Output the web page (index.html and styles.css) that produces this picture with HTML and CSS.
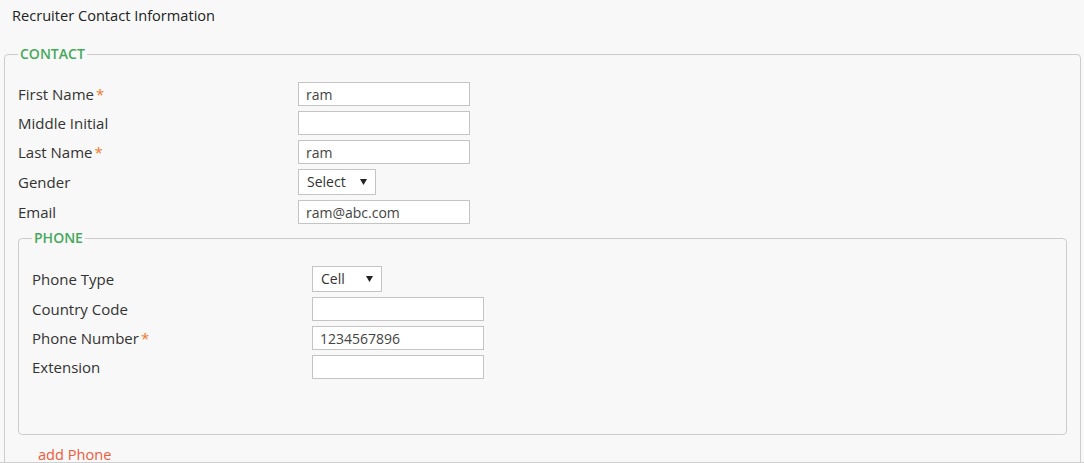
FILE: index.html
```html
<!DOCTYPE html>
<html lang="en">
<head>
<meta charset="utf-8">
<title>Recruiter Contact Information</title>
<link rel="stylesheet" href="styles.css">
</head>
<body>
<div class="page">
  <h1 class="title">Recruiter Contact Information</h1>
  <fieldset class="group">
    <legend class="legend">CONTACT</legend>
    <div class="rows">
      <div class="row">
        <label class="label">First Name<span class="req">*</span></label>
        <input class="input" type="text" value="ram">
      </div>
      <div class="row">
        <label class="label">Middle Initial</label>
        <input class="input" type="text" value="">
      </div>
      <div class="row">
        <label class="label">Last Name<span class="req">*</span></label>
        <input class="input" type="text" value="ram">
      </div>
      <div class="row">
        <label class="label">Gender</label>
        <div class="select select-gender">
          <span class="select-text">Select</span>
          <svg class="caret" width="7" height="6" viewBox="0 0 7 6"><path d="M0 0H7L3.5 6Z" fill="#222"/></svg>
        </div>
      </div>
      <div class="row">
        <label class="label">Email</label>
        <input class="input" type="text" value="ram@abc.com">
      </div>
      <fieldset class="group inner">
        <legend class="legend">PHONE</legend>
        <div class="rows">
          <div class="row">
            <label class="label">Phone Type</label>
            <div class="select select-phone">
              <span class="select-text">Cell</span>
              <svg class="caret" width="7" height="6" viewBox="0 0 7 6"><path d="M0 0H7L3.5 6Z" fill="#222"/></svg>
            </div>
          </div>
          <div class="row">
            <label class="label">Country Code</label>
            <input class="input" type="text" value="">
          </div>
          <div class="row">
            <label class="label">Phone Number<span class="req">*</span></label>
            <input class="input" type="text" value="1234567896">
          </div>
          <div class="row">
            <label class="label">Extension</label>
            <input class="input" type="text" value="">
          </div>
        </div>
      </fieldset>
      <a class="add-link" href="#">add Phone</a>
    </div>
  </fieldset>
</div>
</body>
</html>
```
FILE: styles.css
```css
html, body {
  margin: 0;
  padding: 0;
  background: #f8f8f8;
}
body {
  font-family: "Open Sans", "Liberation Sans", sans-serif;
  font-size: 14px;
  line-height: 20px;
  color: #333;
}
.page {
  height: 462px;
  overflow: hidden;
  border-bottom: 1px solid #cfcfcf;
}
.title {
  margin: 0;
  padding: 5px 0 0 12px;
  font-size: 14.6px;
  font-weight: 400;
  line-height: 20px;
  color: #222;
}
.group {
  margin: 19px 3px 0 4px;
  padding: 18px 13px 40px 13px;
  border: 1px solid #cccccc;
  border-radius: 4px;
  min-width: 0;
}
.group.inner {
  margin: -1px 0 0 0;
  padding-bottom: 55px;
}
.legend {
  padding: 0 2px;
  margin-left: 0;
  font-size: 14px;
  font-weight: 600;
  line-height: 20px;
  color: #45a95b;
}
.rows {
  display: flex;
  flex-direction: column;
  gap: 5px;
}
.row {
  display: grid;
  grid-template-columns: 280px auto;
  align-items: center;
  justify-items: start;
}
.label {
  color: #333;
  font-size: 15px;
  line-height: 20px;
  white-space: nowrap;
}
.req {
  color: #f07a2a;
  margin-left: 2px;
}
.input {
  box-sizing: border-box;
  width: 172px;
  height: 24px;
  margin: 0;
  padding: 0 7px;
  border: 1px solid #c4c4c4;
  border-radius: 0;
  background: #fff;
  font-family: "Open Sans", "Liberation Sans", sans-serif;
  font-size: 14px;
  color: #444;
  outline: none;
}
.select {
  box-sizing: border-box;
  position: relative;
  height: 26px;
  display: flex;
  align-items: center;
  padding: 0 0 0 8px;
  border: 1px solid #c4c4c4;
  background: #fff;
  color: #333;
}
.select-gender { width: 78px; }
.select-phone { width: 70px; }
.caret {
  position: absolute;
  right: 8px;
  top: 9px;
}
.add-link {
  display: block;
  margin: 4px 0 0 20px;
  font-size: 14.6px;
  color: #f05a3c;
  text-decoration: none;
}
```
